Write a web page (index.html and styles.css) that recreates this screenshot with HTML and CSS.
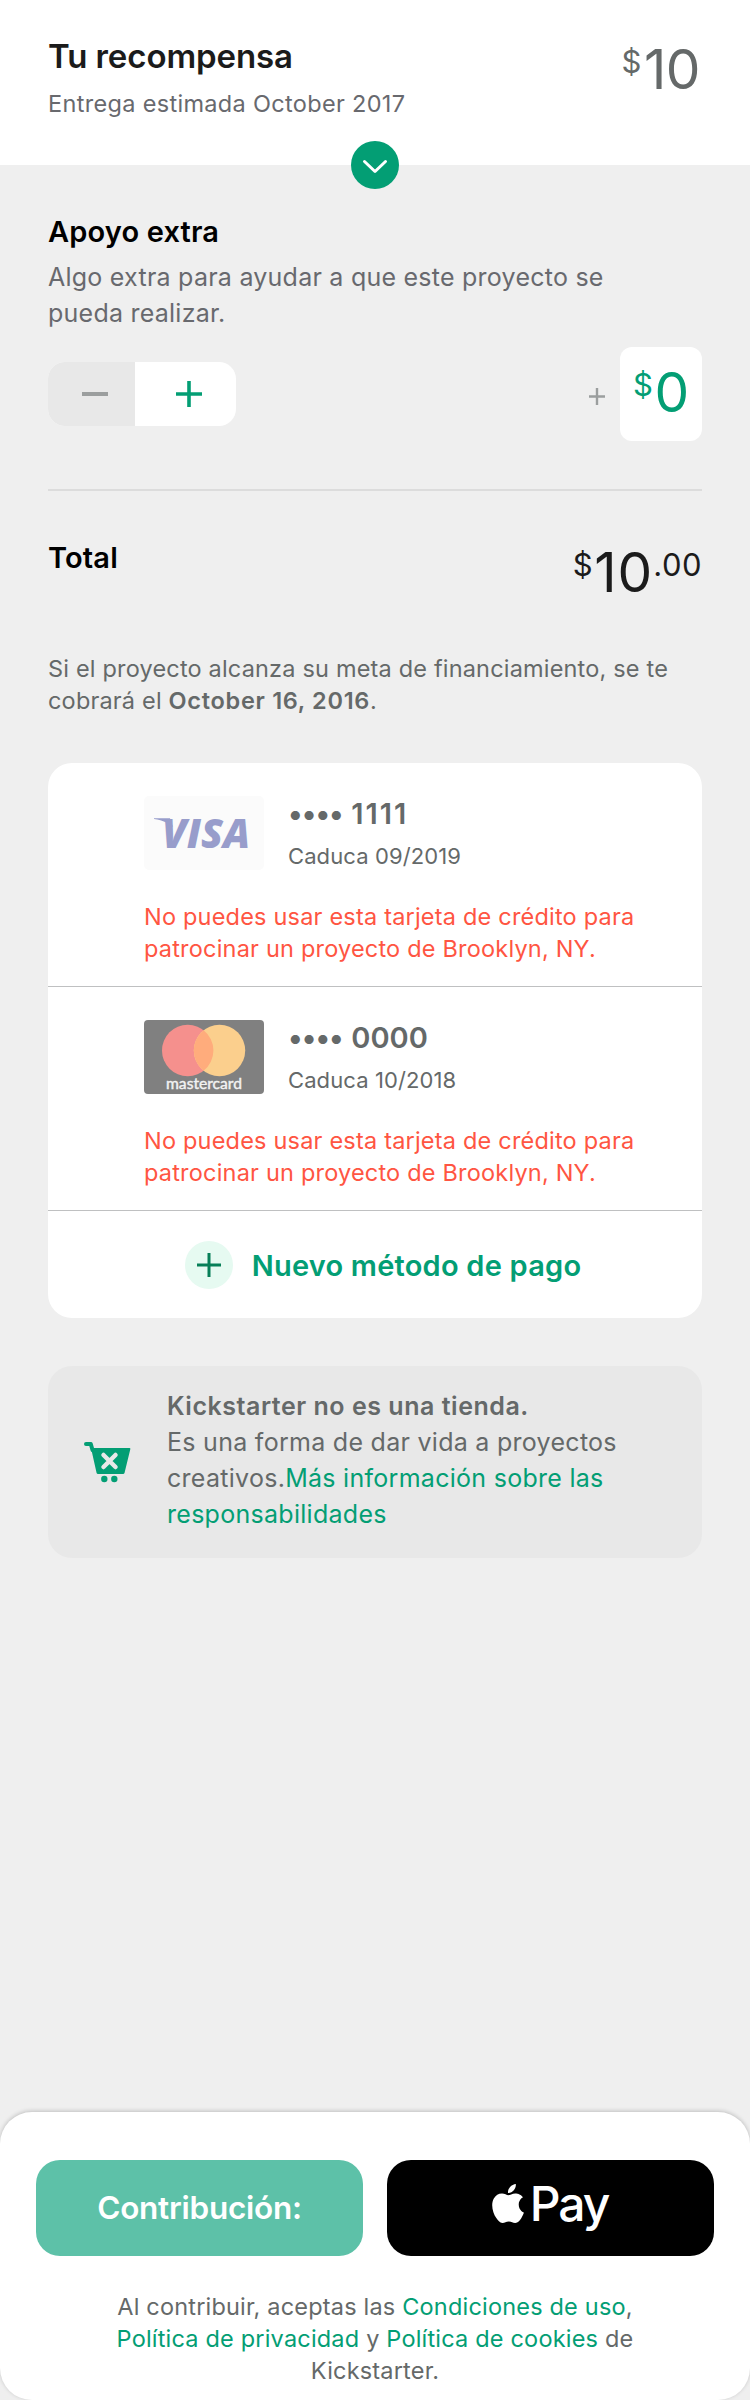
FILE: index.html
```html
<!DOCTYPE html>
<html lang="es">
<head>
<meta charset="utf-8">
<title>Tu recompensa</title>
<link rel="stylesheet" href="styles.css">
</head>
<body>
<div class="page">
  <header class="reward">
    <div>
      <h1 class="reward-title">Tu recompensa</h1>
      <p class="reward-date">Entrega estimada October 2017</p>
    </div>
    <div class="price price-reward"><span class="price-minor">$</span><span class="price-major">10</span></div>
    <button class="expand" aria-label="Expandir">
      <svg width="48" height="48" viewBox="0 0 48 48"><path d="M13.500 20.500 24 30.500 34.500 20.500" fill="none" stroke="#fff" stroke-width="3" stroke-linecap="round" stroke-linejoin="round"/></svg>
    </button>
  </header>

  <main class="content">
    <h2 class="heading">Apoyo extra</h2>
    <p class="extra-text">Algo extra para ayudar a que este proyecto se<br>pueda realizar.</p>
    <div class="extra-row">
      <div class="stepper">
        <button class="step step-minus" aria-label="Menos"><svg width="26" height="26" viewBox="0 0 26 26"><path d="M0 13h26" stroke="#9b9e9e" stroke-width="4"/></svg></button>
        <button class="step step-plus" aria-label="Más"><svg width="26" height="26" viewBox="0 0 26 26"><path d="M0 13h26M13 0v26" stroke="#039e74" stroke-width="3.600"/></svg></button>
      </div>
      <div class="amount">
        <svg class="amount-plus" width="16" height="17" viewBox="0 0 16 17"><path d="M0 8.500h16M8 0v17" stroke="#9b9e9e" stroke-width="2.400"/></svg>
        <div class="amount-box price"><span class="price-minor">$</span><span class="price-major">0</span></div>
      </div>
    </div>

    <div class="total">
      <h2 class="heading">Total</h2>
      <div class="price price-total"><span class="price-minor">$</span><span class="price-major">10</span><span class="price-minor price-cents">.00</span></div>
    </div>
    <p class="charge-note">Si el proyecto alcanza su meta de financiamiento, se te<br>cobrará el <strong>October 16, 2016</strong>.</p>

    <section class="cards">
      <article class="card">
        <div class="card-info">
          <svg class="card-logo" width="120" height="74" viewBox="0 0 120 74">
            <rect width="120" height="74" rx="5" fill="#fbfbfb"/>
            <path d="M10 22.300h16l3 9c-3-4-10-7-19-8.300z" fill="#989dcb"/>
            <text class="visa-text" x="18" y="51.500" textLength="88" lengthAdjust="spacingAndGlyphs">VISA</text>
          </svg>
          <div>
            <p class="card-number"><span class="dots">••••</span> <span class="digits-ones">1111</span></p>
            <p class="card-expiry">Caduca 09/2019</p>
          </div>
        </div>
        <p class="card-error">No puedes usar esta tarjeta de crédito para<br>patrocinar un proyecto de Brooklyn, NY.</p>
      </article>
      <article class="card">
        <div class="card-info">
          <svg class="card-logo" width="120" height="74" viewBox="0 0 120 74">
            <rect width="120" height="74" rx="4" fill="#808080"/>
            <circle cx="43.700" cy="30.500" r="25.700" fill="#f5908d"/>
            <circle cx="75.500" cy="30.500" r="25.700" fill="#fbcf8d"/>
            <path d="M59.600 10.300a25.700 25.700 0 0 1 0 40.400a25.700 25.700 0 0 1 0-40.400z" fill="#ffac7c"/>
            <text class="mastercard-text" x="22" y="68.600" textLength="76" lengthAdjust="spacingAndGlyphs">mastercard</text>
          </svg>
          <div>
            <p class="card-number"><span class="dots">••••</span> 0000</p>
            <p class="card-expiry">Caduca 10/2018</p>
          </div>
        </div>
        <p class="card-error">No puedes usar esta tarjeta de crédito para<br>patrocinar un proyecto de Brooklyn, NY.</p>
      </article>
      <button class="new-card">
        <svg width="48" height="48" viewBox="0 0 48 48"><circle cx="24" cy="24" r="24" fill="#e6faf1"/><path d="M12 24h24M24 12v24" stroke="#077f58" stroke-width="3"/></svg>
        <span class="new-card-label">Nuevo método de pago</span>
      </button>
    </section>

    <aside class="notice">
      <svg class="cart" width="48" height="42" viewBox="0 0 48 42">
        <path d="M2 2H6.800L8.500 8" fill="none" stroke="#039e74" stroke-width="4" stroke-linecap="round" stroke-linejoin="round"/>
        <path d="M7 6H45.300a1 1 0 0 1 1 1.300L40.500 31a1.500 1.500 0 0 1-1.400 1H14a1.500 1.500 0 0 1-1.400-1z" fill="#039e74"/>
        <path d="M19.500 13 31.500 25M31.500 13 19.500 25" stroke="#e8e8e8" stroke-width="4.500" stroke-linecap="round"/>
        <circle cx="20.300" cy="37" r="3.200" fill="#039e74"/><circle cx="30.300" cy="37" r="3.200" fill="#039e74"/>
      </svg>
      <p class="notice-text"><strong>Kickstarter no es una tienda.</strong><br>Es una forma de dar vida a proyectos<br>creativos.<a>Más información sobre las<br>responsabilidades</a></p>
    </aside>
  </main>

  <footer class="footer">
    <div class="buttons">
      <button class="button button-pledge">Contribución:</button>
      <button class="button button-apple" aria-label="Apple Pay">
        <svg width="32" height="39" viewBox="2.100 0 19.700 24"><path fill="#fff" d="M12.152 6.896c-.948 0-2.415-1.078-3.960-1.040-2.040.027-3.910 1.183-4.961 3.014-2.117 3.675-.546 9.103 1.519 12.090 1.013 1.454 2.208 3.090 3.792 3.039 1.520-.065 2.090-.987 3.935-.987 1.831 0 2.350.987 3.960.948 1.637-.026 2.676-1.480 3.676-2.948 1.156-1.688 1.636-3.325 1.662-3.415-.039-.013-3.182-1.221-3.220-4.857-.026-3.040 2.480-4.494 2.597-4.559-1.429-2.090-3.623-2.324-4.390-2.376-2-.156-3.675 1.090-4.610 1.090zM15.530 3.830c.843-1.012 1.400-2.427 1.245-3.830-1.207.052-2.662.805-3.532 1.818-.780.896-1.454 2.338-1.273 3.714 1.338.104 2.715-.688 3.560-1.702"/></svg>
        <span class="pay">Pay</span>
      </button>
    </div>
    <p class="legal">Al contribuir, aceptas las <a>Condiciones de uso</a>,<br><a>Política de privacidad</a> y <a>Política de cookies</a> de<br>Kickstarter.</p>
  </footer>
</div>
</body>
</html>
```

FILE: styles.css
```css
* { box-sizing: border-box; }
body, h1, h2, p { margin: 0; }
body { background: #efefef; font-family: Inter, "Liberation Sans", sans-serif; color: #656969; }
button { border: 0; padding: 0; margin: 0; background: none; font-family: inherit; }
svg { display: block; flex: none; }
strong { font-weight: 600; }
a { color: #039e74; }

.page { width: 750px; height: 2400px; display: flex; flex-direction: column; overflow: hidden; }

.reward { position: relative; height: 165px; flex: none; padding: 36px 50px 0 48px; background: #fff; display: flex; justify-content: space-between; }
.reward-title { font-size: 33px; line-height: 40px; font-weight: 600; letter-spacing: -0.1px; color: #1b1b1b; }
.reward-date { margin-top: 13px; font-size: 23.5px; line-height: 30px; letter-spacing: 0.32px; color: #68696e; }
.expand { position: absolute; left: 351px; top: 141px; width: 48px; height: 48px; border-radius: 50%; background: #039e74; }

.price { display: flex; align-items: flex-start; }
.price-major { font-size: 55px; line-height: 64px; letter-spacing: -0.5px; }
.price-minor { font-size: 31px; line-height: 50px; margin-right: 1.5px; }
.price-cents { margin: 0; letter-spacing: 0.5px; }
.price-reward { padding-top: 1px; }
.price-reward .price-minor { margin-right: 2.5px; }

.content { flex: 1; padding: 49px 48px 0; }
.heading { font-size: 29px; line-height: 36px; font-weight: 600; letter-spacing: 0.15px; color: #000; }
.extra-text { margin-top: 9px; font-size: 25px; line-height: 36px; letter-spacing: 0.24px; color: #68696e; }
.extra-row { margin-top: 16px; height: 94px; display: flex; justify-content: space-between; align-items: center; }
.stepper { display: flex; width: 188px; height: 64px; border-radius: 17px; overflow: hidden; background: #fff; }
.step { display: flex; align-items: center; justify-content: center; }
.step-minus { width: 87px; padding-left: 7px; background: #e8e8e8; }
.step-plus { width: 101px; padding-left: 7px; }
.amount { display: flex; align-items: center; gap: 15px; }
.amount-plus { margin-top: 5px; }
.amount-box { width: 82px; height: 94px; padding: 13px 0 0 13px; border-radius: 12px; background: #fff; color: #039e74; }

.total { margin-top: 48px; padding-top: 49px; border-top: 2px solid #dcdcdc; display: flex; justify-content: space-between; height: 114px; }
.total .price-major { letter-spacing: 1px; }
.price-total { color: #1b1b1b; }
.charge-note { margin-top: 50px; font-size: 23.5px; line-height: 32px; letter-spacing: 0.18px; }
.charge-note strong { letter-spacing: 0.7px; }

.cards { margin-top: 46px; height: 555px; border-radius: 24px; background: #fff; overflow: hidden; }
.card { height: 224px; padding: 33px 48px 0 96px; border-bottom: 1px solid #bfc0c1; }
.card-info { display: flex; gap: 24px; height: 74px; }
.card-number { font-size: 29px; line-height: 36px; font-weight: 600; }
.dots { letter-spacing: -0.9px; margin-right: 1.2px; }
.digits-ones { letter-spacing: 2px; }
.card-expiry { margin-top: 10px; font-size: 22px; line-height: 28px; letter-spacing: 0.1px; }
.card-error { margin-top: 31px; font-size: 23.5px; line-height: 32px; letter-spacing: 0.2px; color: #ff5542; }
.visa-text { font-family: "Open Sans", sans-serif; font-weight: 800; font-style: italic; font-size: 40px; fill: #989dcb; }
.mastercard-text { font-family: Lato, sans-serif; font-weight: 400; font-size: 14.5px; fill: #f2f2f2; stroke: #f2f2f2; stroke-width: 0.4px; }
.new-card { width: 100%; height: 107px; padding-left: 16px; display: flex; align-items: center; justify-content: center; gap: 19px; font-size: 29px; line-height: 36px; font-weight: 600; letter-spacing: 0.22px; color: #039e74; }
.new-card-label { padding-top: 2px; }

.notice { margin-top: 48px; height: 192px; border-radius: 24px; background: #e8e8e8; display: flex; align-items: flex-start; padding: 22px 0 0 36px; }
.cart { margin-top: 54px; }
.notice-text { margin-left: 35px; font-size: 25px; line-height: 36px; letter-spacing: 0.28px; }
.notice-text strong { letter-spacing: 0.53px; }

.footer { flex: none; height: 288px; padding: 48px 36px 0; border-radius: 32px; background: #fff; box-shadow: 0 -1px 4px rgba(0, 0, 0, 0.2); }
.buttons { display: grid; grid-template-columns: 1fr 1fr; gap: 24px; }
.button { height: 96px; border-radius: 24px; display: flex; align-items: center; justify-content: center; color: #fff; }
.button-pledge { padding-bottom: 1px; background: #5dc1a8; font-size: 31.5px; font-weight: 600; letter-spacing: -0.25px; }
.button-apple { background: #000; gap: 6px; padding: 0 1px 9px 0; }
.pay { font-size: 48px; line-height: 39px; font-weight: 500; letter-spacing: -2.1px; }
.legal { margin-top: 35px; font-size: 23.5px; line-height: 32px; letter-spacing: 0.19px; text-align: center; }
```
